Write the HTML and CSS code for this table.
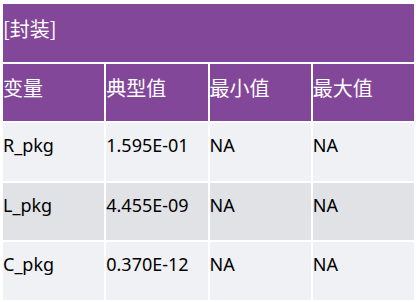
FILE: index.html
```html
<!DOCTYPE html>
<html lang="zh">
<head>
<meta charset="utf-8">
<link rel="stylesheet" href="styles.css">
</head>
<body>
<div class="wrap">
<table class="params">
  <tr class="title-row"><td colspan="4" class="title">[封装]</td></tr>
  <tr class="head-row">
    <th>变量</th><th>典型值</th><th>最小值</th><th>最大值</th>
  </tr>
  <tr class="row light"><td>R_pkg</td><td>1.595E-01</td><td>NA</td><td>NA</td></tr>
  <tr class="row dark"><td>L_pkg</td><td>4.455E-09</td><td>NA</td><td>NA</td></tr>
  <tr class="row light"><td>C_pkg</td><td>0.370E-12</td><td>NA</td><td>NA</td></tr>
</table>
</div>
</body>
</html>
```
FILE: styles.css
```css
html, body {
  margin: 0;
  background: #ffffff;
}
.wrap {
  padding: 2px 0 0 1px;
}
.params {
  width: 100%;
  table-layout: fixed;
  border-collapse: separate;
  border-spacing: 2px;
  font-family: "Noto Sans", "Noto Sans CJK SC", sans-serif;
}
.params td, .params th {
  box-sizing: border-box;
  padding: 10px 0 0 0;
  vertical-align: top;
  text-align: left;
  font-weight: normal;
  white-space: nowrap;
  overflow: hidden;
}
.title-row td { height: 58px; }
.head-row th { height: 57px; }
.row td { height: 58px; }
.row.dark td { height: 57px; }
.title, .head-row th {
  background: #83479a;
  color: #ffffff;
  font-family: "Noto Sans CJK SC", sans-serif;
  font-size: 20px;
  padding-top: 9px;
}
.row td {
  color: #000000;
  font-size: 18px;
}
.row.light td { background: #f0f1f5; }
.row.dark td { background: #e1e2e6; }
```
